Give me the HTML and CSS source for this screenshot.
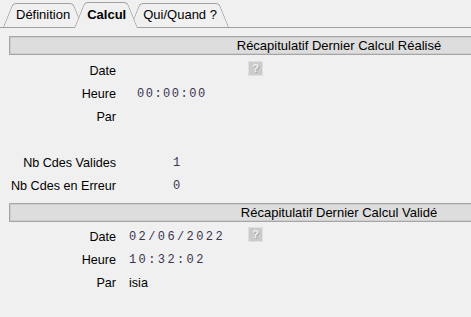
FILE: index.html
```html
<!DOCTYPE html>
<html>
<head>
<meta http-equiv="Content-Type" content="text/html; charset=utf-8"/>
<title>Calcul</title>
<link rel="stylesheet" href="styles.css">
</head>
<body>

<div class="tabs">
  <div class="tab">Définition</div>
  <div class="tab active">Calcul</div>
  <div class="tab">Qui/Quand ?</div>
</div>

<div class="bar">Récapitulatif Dernier Calcul Réalisé</div>
<div class="fields last-calc">
  <div class="lbl">Date</div>
  <div class="val"><span class="field"></span><span class="help">?</span></div>
  <div class="lbl">Heure</div>
  <div class="val mono">00:00:00</div>
  <div class="lbl">Par</div>
  <div class="val"></div>
  <div class="lbl"></div>
  <div class="val"></div>
  <div class="lbl">Nb Cdes Valides</div>
  <div class="val mono num">1</div>
  <div class="lbl">Nb Cdes en Erreur</div>
  <div class="val mono num">0</div>
</div>

<div class="bar">Récapitulatif Dernier Calcul Validé</div>
<div class="fields valid-calc">
  <div class="lbl">Date</div>
  <div class="val"><span class="field mono">02/06/2022</span><span class="help">?</span></div>
  <div class="lbl">Heure</div>
  <div class="val mono">10:32:02</div>
  <div class="lbl">Par</div>
  <div class="val">isia</div>
</div>

</body>
</html>
```

FILE: styles.css
```css
body {
  margin: 0;
  height: 317px;
  overflow: hidden;
  background-color: #f0f0f0;
  color: #000;
  font-family: 'Liberation Sans', Arial, sans-serif;
  font-size: 13px;
}

/* tab strip */
.tabs {
  display: flex;
  align-items: flex-end;
  height: 27px;
  padding-left: 3px;
  border-bottom: 1px solid #a0a0a0;
}

.tab {
  position: relative;
  z-index: 0;
  height: 24px;
  line-height: 24px;
  padding: 0 12px 0 13px;
  margin-right: -8px;
}

.tab::before, .tab::after {
  content: "";
  position: absolute;
  top: 0;
  bottom: 0;
  z-index: -1;
  background-color: #f0f0f0;
  border-top: 1px solid #a0a0a0;
}

.tab::before {
  left: 0;
  right: 50%;
  border-left: 1px solid #a0a0a0;
  border-top-left-radius: 4px;
  transform-origin: 0 100%;
  transform: skewX(-22deg);
}

.tab::after {
  left: 50%;
  right: 0;
  border-right: 1px solid #a0a0a0;
  border-top-right-radius: 4px;
  transform-origin: 100% 100%;
  transform: skewX(22deg);
}

.tab.active {
  z-index: 1;
  height: 26px;
  line-height: 26px;
  margin-bottom: -1px;
  font-weight: bold;
}

/* section header */
.bar {
  width: 658px;
  height: 17px;
  margin: 8px 0 0 9px;
  line-height: 17px;
  text-align: center;
  background-color: #dddddd;
  border: 1px solid #a6a6a6;
  box-shadow: inset 0 0 0 1px #cdcdcd;
}

.bar + .fields {
  margin-top: 4px;
}

.fields + .bar {
  margin-top: 6px;
}

/* label / value rows */
.fields {
  display: grid;
  grid-template-columns: 116px 1fr;
  grid-auto-rows: 23px;
  align-items: center;
  font-size: 12.6px;
}

.last-calc {
  column-gap: 21px;
}

.valid-calc {
  column-gap: 13px;
  margin-top: 3px !important;
}

.lbl {
  text-align: right;
  white-space: nowrap;
}

.val {
  display: flex;
  align-items: center;
  white-space: nowrap;
}

.mono {
  font-family: 'Liberation Mono', 'Courier New', monospace;
  font-size: 12px;
  color: #3a3450;
}

.last-calc .mono {
  letter-spacing: 1.5px;
}

.valid-calc .mono {
  letter-spacing: 2.4px;
}

.num {
  padding-left: 36px;
}

.field {
  display: inline-block;
}

.last-calc .field {
  width: 111px;
}

.valid-calc .field {
  width: 119px;
}

.help {
  display: inline-block;
  width: 13px;
  height: 13px;
  margin-bottom: 4px;
  border: 1px solid #e0e0e0;
  background-color: #cbcbcb;
  color: #f2f2f2;
  font-family: 'Liberation Sans', Arial, sans-serif;
  font-size: 11px;
  font-weight: bold;
  line-height: 13px;
  text-align: center;
  text-shadow: 1px 1px 0 #a8a8a8;
}
```
